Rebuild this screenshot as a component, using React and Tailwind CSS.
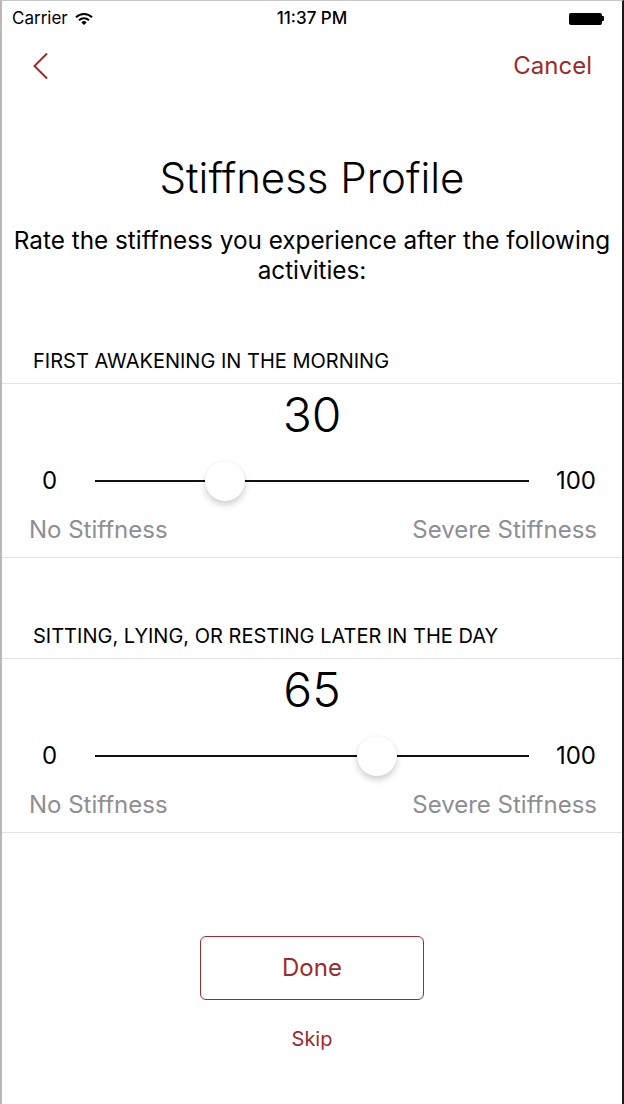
import React from "react";

const RED = "text-[#9e2a2b]";

function StatusBar() {
  return (
    <div className="relative flex h-[35px] items-center px-[10px] text-[17px] text-black">
      <span>Carrier</span>
      <svg width="18" height="14" viewBox="0 0 18 14" className="ml-[7px]">
        <path d="M1 5.2a11.5 11.5 0 0 1 16 0" stroke="#000" strokeWidth="2" fill="none" />
        <path d="M4 8.2a7.2 7.2 0 0 1 10 0" stroke="#000" strokeWidth="2" fill="none" />
        <path d="M9 13l-2.6-2.6a3.7 3.7 0 0 1 5.2 0z" fill="#000" />
      </svg>
      <span className="absolute left-1/2 -translate-x-1/2 font-medium">11:37 PM</span>
      <div className="ml-auto mr-[8px] flex items-center">
        <div className="h-[12px] w-[33px] rounded-[2px] bg-black" />
        <div className="h-[5px] w-[2px] rounded-r-[1px] bg-black" />
      </div>
    </div>
  );
}

function Slider({ value }) {
  return (
    <div className="mt-[20px] flex h-[40px] items-center text-[24px] text-black">
      <span className="w-[93px] pl-[40px]">0</span>
      <div className="relative h-[2px] flex-1 bg-[#111]">
        <div
          className="absolute top-1/2 h-[40px] w-[40px] -translate-x-1/2 -translate-y-1/2 rounded-full bg-white shadow-[0_4px_6px_rgba(0,0,0,0.18),0_0_1px_rgba(0,0,0,0.12)]"
          style={{ left: `${value}%` }}
        />
      </div>
      <span className="w-[93px] pr-[26px] text-right">100</span>
    </div>
  );
}

function Section({ title, value, className }) {
  return (
    <div className={className}>
      <div className="border-b border-[#e3e3e6] pb-[10px] pl-[31px] text-[20px] leading-[24px] text-black">
        {title}
      </div>
      <div className="border-b border-[#e3e3e6] pb-[13px]">
        <div className="pt-[5px] text-center text-[48px] font-light leading-[52px] text-black">{value}</div>
        <Slider value={value} />
        <div className="mt-[15px] flex justify-between pl-[27px] pr-[25px] text-[24px] leading-[28px] text-[#8e8e93]">
          <span>No Stiffness</span>
          <span>Severe Stiffness</span>
        </div>
      </div>
    </div>
  );
}

export default function App() {
  return (
    <div
      className="h-[1104px] w-[624px] overflow-hidden border-l-2 border-r-2 border-t border-l-[#b8b8b8] border-r-[#1a1a1a] border-t-[#c8c8c8] bg-white"
      style={{ fontFamily: "Inter, 'Liberation Sans', sans-serif" }}
    >
      <StatusBar />
      <div className="flex h-[60px] items-center justify-between pl-[30px] pr-[30px]">
        <svg width="18" height="28" viewBox="0 0 18 28">
          <path d="M15 1.5L2.5 14L15 26.5" stroke="#9e2a2b" strokeWidth="2" fill="none" />
        </svg>
        <span className={`text-[24px] ${RED}`}>Cancel</span>
      </div>
      <h1 className="mt-[58px] text-center text-[42px] font-light leading-[48px] text-black">Stiffness Profile</h1>
      <p className="mx-auto mt-[23px] w-[618px] text-center text-[24.3px] leading-[30px] text-black">
        Rate the stiffness you experience after the following activities:
      </p>
      <Section className="mt-[64px]" title="FIRST AWAKENING IN THE MORNING" value={30} />
      <Section className="mt-[66px]" title="SITTING, LYING, OR RESTING LATER IN THE DAY" value={65} />
      <div className="mt-[103px] flex flex-col items-center">
        <button className={`flex h-[64px] w-[224px] items-center justify-center rounded-[6px] border-[1.5px] border-[#9e2a2b] text-[24px] ${RED}`}>
          Done
        </button>
        <span className={`mt-[27px] text-[20px] leading-[24px] ${RED}`}>Skip</span>
      </div>
    </div>
  );
}
